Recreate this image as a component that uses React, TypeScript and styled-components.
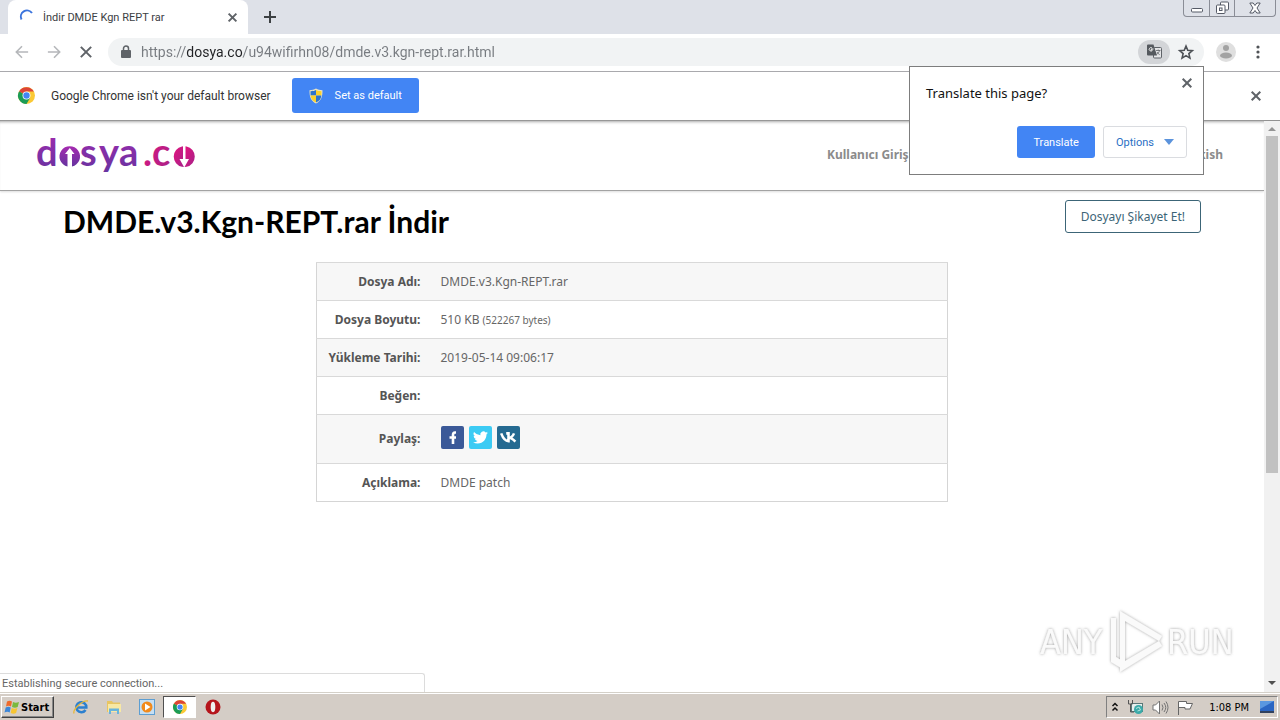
import React from "react";
import styled, { createGlobalStyle } from "styled-components";

const ui = `Roboto, "Noto Sans", sans-serif`;
const site = `"Noto Sans", "Open Sans", sans-serif`;
const classic = `"DejaVu Sans Condensed", "DejaVu Sans", sans-serif`;

const GlobalStyle = createGlobalStyle`
  * { box-sizing: border-box; }
  body { margin: 0; background: #fff; }
  button, input { font: inherit; margin: 0; }
  svg { display: block; flex: none; overflow: visible; }
`;

const Desktop = styled.div`
  position: relative;
  display: flex;
  flex-direction: column;
  min-height: 100vh;
  overflow: hidden;
  font-family: ${ui};
  font-size: 12px;
`;

const TabStrip = styled.div`
  display: flex;
  height: 34px;
  background: #dee1e8;
  padding-left: 8px;
`;

const Tab = styled.div`
  display: flex;
  align-items: center;
  width: 240px;
  padding: 0 10px 0 12px;
  background: #fff;
  border-radius: 8px 8px 0 0;
  color: #3c4043;
  font-size: 11px;
`;

const TabTitle = styled.span`
  flex: 1;
  padding-left: 8px;
  white-space: nowrap;
`;

const IconButton = styled.button<{ $size?: number }>`
  display: flex;
  align-items: center;
  justify-content: center;
  flex: none;
  width: ${(p) => p.$size ?? 32}px;
  height: ${(p) => p.$size ?? 32}px;
  padding: 0;
  border: 0;
  background: none;
`;

const NewTab = styled(IconButton)`
  height: 34px;
  margin-left: 6px;
`;

const WindowButtons = styled.div`
  display: flex;
  height: 17px;
  margin-left: auto;
  margin-right: 4px;
  border: 1px solid #8a8d96;
  border-top: 0;
  border-radius: 0 0 4px 4px;
`;

const WindowButton = styled.button<{ $wide?: boolean }>`
  display: flex;
  align-items: center;
  justify-content: center;
  width: ${(p) => (p.$wide ? 41 : 25)}px;
  padding: 0;
  border: 0;
  border-left: 1px solid #8a8d96;
  background: none;
  &:first-child { border-left: 0; }
`;

const Toolbar = styled.div`
  display: flex;
  align-items: center;
  height: 38px;
  padding: 0 6px 2px;
  border-bottom: 1px solid #a9a9ad;
`;

const Omnibox = styled.div`
  display: flex;
  align-items: center;
  flex: 1;
  height: 28px;
  margin: 0 6px;
  padding: 0 2px 0 12px;
  border-radius: 14px;
  background: #f1f3f4;
`;

const Address = styled.input`
  flex: 1;
  min-width: 0;
  height: 24px;
  margin-left: 9px;
  padding: 0;
  border: 0;
  outline: 0;
  font-size: 14px;
  color: #777b80;
  background: linear-gradient(90deg, #777b80 45px, #202124 45px, #202124 102px, #777b80 102px);
  background-clip: text;
  -webkit-background-clip: text;
  -webkit-text-fill-color: transparent;
`;

const TranslateChip = styled(IconButton)`
  height: 24px;
  border-radius: 12px;
  background: #d3d5d8;
`;

const InfoBar = styled.div`
  display: flex;
  align-items: center;
  height: 49px;
  padding: 0 8px 1px 18px;
  border-bottom: 1px solid #929292;
  color: #333;
`;

const InfoText = styled.span`
  margin: 0 21px 0 16px;
  white-space: nowrap;
`;

const FilledButton = styled.button<{ $height: number; $pad: number }>`
  display: flex;
  align-items: center;
  gap: 12px;
  height: ${(p) => p.$height}px;
  padding: 0 ${(p) => p.$pad}px;
  border: 0;
  border-radius: 3px;
  background: #4285f4;
  color: #fff;
  font-size: 11px;
  white-space: nowrap;
`;

const OutlineButton = styled(FilledButton)`
  gap: 10px;
  border: 1px solid #dadce0;
  background: #fff;
  color: #2a6fc4;
`;

const InfoClose = styled(IconButton)`
  margin-left: auto;
`;

const Viewport = styled.div`
  position: relative;
  display: flex;
  flex: 1;
`;

const Page = styled.div`
  flex: 1;
  min-width: 0;
  font-family: ${site};
  color: #5a5a5a;
`;

const SiteHeader = styled.header`
  display: flex;
  align-items: center;
  justify-content: space-between;
  height: 70px;
  padding: 0 41px 2px 34px;
  border-bottom: 1px solid #a3a3a3;
  box-shadow: inset 0 3px 3px -2px #aaa, 0 1px 2px #ddd;
`;

const SiteNav = styled.nav`
  display: flex;
  justify-content: space-between;
  width: 396px;
  font-weight: 700;
  line-height: 16px;
  a { color: #8b8b8b; text-decoration: none; }
`;

const TitleRow = styled.div`
  display: flex;
  align-items: flex-start;
  justify-content: space-between;
  padding: 9px 63px 0;
`;

const Title = styled.h1`
  margin: 0;
  color: #000;
  font-family: Lato, sans-serif;
  font-size: 30px;
  font-weight: 700;
  line-height: 42px;
`;

const ReportButton = styled.button`
  height: 33px;
  padding: 0 15px;
  border: 1px solid #3c6577;
  border-radius: 3px;
  background: #fff;
  color: #3c6577;
  white-space: nowrap;
`;

const FileTable = styled.table`
  width: 50%;
  margin: 20px auto 0;
  border: 1px solid #d5d5d5;
  border-collapse: collapse;
  th, td {
    height: 38px;
    padding: 0 10px;
    border-top: 1px solid #d9d9d9;
    line-height: 18px;
  }
  th { width: 114px; text-align: right; white-space: nowrap; color: #555; }
  td { color: #666; }
  tr:nth-child(odd) { background: #f7f7f7; }
  small { font-size: 10px; line-height: 14px; }
`;

const ShareRow = styled.div`
  display: flex;
  gap: 5px;
  padding: 11px 0 14px;
`;

const ShareLink = styled.a<{ $color: string }>`
  display: flex;
  align-items: center;
  justify-content: center;
  width: 23px;
  height: 23px;
  border-radius: 2px;
  background: ${(p) => p.$color};
`;

const ScrollBar = styled.div`
  display: flex;
  flex-direction: column;
  align-items: center;
  width: 16px;
  padding: 4px 0 5px;
  background: #f1f1f1;
`;

const ScrollThumb = styled.div`
  width: 12px;
  height: 60%;
  margin-top: 3px;
  margin-bottom: auto;
  background: #c1c1c1;
`;

const Status = styled.div`
  position: absolute;
  left: 0;
  bottom: 0;
  width: 425px;
  height: 19px;
  padding-left: 2px;
  border: 1px solid #dcdcdc;
  border-left: 0;
  border-bottom: 0;
  border-radius: 0 3px 0 0;
  background: #fff;
  color: #666;
  font-size: 11px;
  line-height: 19px;
`;

const Watermark = styled.div`
  position: absolute;
  right: 44px;
  bottom: 18px;
`;

const Popup = styled.section`
  position: absolute;
  top: 66px;
  right: 76px;
  width: 295px;
  height: 109px;
  padding: 8px 8px 16px 16px;
  border: 1px solid #7d7d7d;
  background: #fff;
  display: flex;
  flex-direction: column;
  justify-content: space-between;
`;

const PopupHead = styled.div`
  display: flex;
  justify-content: space-between;
  align-items: flex-start;
`;

const PopupTitle = styled.h2`
  margin: 8px 0 0;
  color: #111;
  font-family: ${site};
  font-size: 13px;
  font-weight: 400;
  line-height: 20px;
`;

const PopupActions = styled.div`
  display: flex;
  justify-content: flex-end;
  gap: 8px;
  padding-right: 8px;
`;

const Taskbar = styled.footer`
  display: flex;
  align-items: center;
  height: 28px;
  padding: 1px 2px 0 1px;
  border-top: 1px solid #d4d0c8;
  box-shadow: inset 0 1px #fff;
  background: #d4cdc6;
  font-family: ${classic};
`;

const StartButton = styled.button`
  display: flex;
  align-items: center;
  gap: 1px;
  width: 53px;
  height: 22px;
  margin-right: 10px;
  padding: 0 2px;
  border: 1px solid;
  border-color: #fff #404040 #404040 #fff;
  box-shadow: inset -1px -1px #888;
  background: #d4cdc6;
  font-size: 11px;
  font-weight: 700;
`;

const TaskButton = styled.button<{ $active?: boolean }>`
  display: flex;
  align-items: center;
  justify-content: center;
  width: 33px;
  height: 22px;
  padding: 0;
  border: 1px solid;
  border-color: ${(p) => (p.$active ? "#505050 #fff #fff #505050" : "transparent")};
  background: ${(p) => (p.$active ? "#fff" : "none")};
`;

const Tray = styled.div`
  display: flex;
  align-items: center;
  gap: 8px;
  height: 22px;
  margin-left: auto;
  padding: 0 2px 0 4px;
  border: 1px solid;
  border-color: #808080 #fff #fff #808080;
  color: #000;
  font-size: 11px;
  time { margin: 0 2px 0 7px; }
`;

const Cross = ({ size = 10, color = "#5f6368", width = 2 }: { size?: number; color?: string; width?: number }) => (
  <svg width={size} height={size} viewBox="0 0 10 10" stroke={color} strokeWidth={(width * 10) / size} aria-hidden>
    <path d="M.7.7l8.6 8.6M9.3.7L.7 9.3" />
  </svg>
);

const Arrow = ({ flip }: { flip?: boolean }) => (
  <svg width="14" height="14" viewBox="0 0 16 16" fill="none" stroke="#b5b7ba" strokeWidth="1.8" aria-hidden>
    <path d={flip ? "M1 8h13M8 1.5L14.5 8 8 14.5" : "M15 8H2M8 1.5L1.5 8 8 14.5"} />
  </svg>
);

const ChromeIcon = ({ size = 17 }: { size?: number }) => (
  <svg width={size} height={size} viewBox="0 0 24 24" aria-hidden>
    <circle cx="12" cy="12" r="12" fill="#fbc935" />
    <path d="M12 12L1.6 6A12 12 0 0 0 12 24l5.2-9z" fill="#1b9c56" />
    <path d="M12 12L1.6 6A12 12 0 0 1 22.4 6.500H12z" fill="#dc4437" />
    <circle cx="12" cy="12" r="5.600" fill="#fff" />
    <circle cx="12" cy="12" r="4.500" fill="#4285f4" />
  </svg>
);

const Shield = () => (
  <svg width="14" height="16" viewBox="0 0 14 16" aria-hidden>
    <path d="M7 .5c2 1.300 4 1.700 6.500 1.700 0 6.500-1 10.300-6.500 13.300C1.500 12.500.5 8.700.5 2.200 3 2.200 5 1.800 7 .5z" fill="#e9e4c4" />
    <path d="M7 2v5.500H1.600L1.500 3.200C4 3.200 5.500 2.800 7 2z" fill="#2e74cc" />
    <path d="M7 2v5.500h5.400l.1-4.300C10 3.200 8.500 2.800 7 2z" fill="#fbd12b" />
    <path d="M7 7.500H1.600C2 11 3.500 12.800 7 14.500z" fill="#fbd12b" />
    <path d="M7 7.500h5.400C12 11 10.500 12.800 7 14.500z" fill="#2e74cc" />
  </svg>
);

const Logo = () => (
  <svg width="164" height="50" viewBox="34 128 164 50" role="img" aria-label="dosya.co">
    <defs>
      <linearGradient id="violet" x1="0" y1="0" x2="0" y2="1">
        <stop offset="0" stopColor="#a52ab0" />
        <stop offset="1" stopColor="#65339f" />
      </linearGradient>
      <linearGradient id="pink" x1="0" y1="0" x2="1" y2="1">
        <stop offset="0" stopColor="#e5127d" />
        <stop offset="1" stopColor="#a5238a" />
      </linearGradient>
    </defs>
    <g fontFamily="Lato, sans-serif" fontSize="38" fontWeight="700">
      <text x="36 80 99 119" y="164" fill="url(#violet)">dsya</text>
      <text x="143 152" y="164" fill="url(#pink)">.c</text>
    </g>
    <path d="M67.500 164.500A10.300 10.300 0 1 1 72 164.500V152h2.500l-4.700-6-4.800 6h2.500z" fill="url(#violet)" />
    <path d="M182 144.500A10.300 10.300 0 0 0 182 164.700l2 .3-4.500-8H183v-12.700z" fill="url(#pink)" />
    <path d="M186.500 144.500A10.300 10.300 0 0 1 186.500 164.700l-2 .3 4.500-8h-3.500v-12.700z" fill="url(#pink)" />
  </svg>
);

const AnyRun = () => (
  <svg width="200" height="66" viewBox="0 0 200 66" role="img" aria-label="ANY RUN">
    <defs>
      <filter id="halo" x="-10%" y="-10%" width="120%" height="120%">
        <feDropShadow dx="0" dy="0" stdDeviation="1.500" floodColor="#777" floodOpacity=".7" />
      </filter>
    </defs>
    <g filter="url(#halo)" fill="#fafafa" fontFamily="DejaVu Sans Condensed, sans-serif" fontSize="34">
      <text x="4" y="46">ANY</text>
      <text x="131" y="46">RUN</text>
      <path d="M84 3l42 25-3 5-34-20v40l34-20 3 5-42 26z" />
      <path d="M75 10h5v39l5 3v8l-10-6z" />
    </g>
  </svg>
);

const rows: { label: string; value: React.ReactNode }[] = [
  { label: "Dosya Adı:", value: "DMDE.v3.Kgn-REPT.rar" },
  { label: "Dosya Boyutu:", value: <>510 KB <small>(522267 bytes)</small></> },
  { label: "Yükleme Tarihi:", value: "2019-05-14 09:06:17" },
  { label: "Beğen:", value: null },
  {
    label: "Paylaş:",
    value: (
      <ShareRow>
        <ShareLink href="#facebook" aria-label="Facebook" $color="#3b5998">
          <svg width="15" height="17" viewBox="0 0 15 17" fill="none" stroke="#fff" strokeWidth="2.600" aria-hidden>
            <path d="M11 3.500H10Q8 3.500 8 6v9M4.500 8.500h6.500" />
          </svg>
        </ShareLink>
        <ShareLink href="#twitter" aria-label="Twitter" $color="#3ccbf4">
          <svg width="15" height="15" viewBox="0 0 24 24" fill="#fff" aria-hidden>
            <path d="M23.950 4.570a10 10 0 0 1-2.820.77 4.960 4.960 0 0 0 2.160-2.720 9.900 9.900 0 0 1-3.120 1.180 4.920 4.920 0 0 0-8.390 4.490A14 14 0 0 1 1.640 3.160a4.920 4.920 0 0 0 1.520 6.570 4.900 4.900 0 0 1-2.230-.61v.06a4.920 4.920 0 0 0 3.950 4.830 5 5 0 0 1-2.210.08 4.940 4.940 0 0 0 4.600 3.420A9.870 9.870 0 0 1 0 19.540a14 14 0 0 0 7.550 2.210c9.050 0 14-7.500 14-13.990l-.02-.63a10 10 0 0 0 2.420-2.560z" />
          </svg>
        </ShareLink>
        <ShareLink href="#vk" aria-label="VK" $color="#256a91">
          <svg width="17" height="11" viewBox="0 0 18 12" fill="none" stroke="#fff" strokeWidth="2.800" aria-hidden>
            <path d="M1 1.500c1.500 4 4 8.500 8 8.500V1.500H6.500M9 6.500c3 0 5-2.500 6-5M9 6c3 0 5 2 7.500 4.500" />
          </svg>
        </ShareLink>
      </ShareRow>
    ),
  },
  { label: "Açıklama:", value: "DMDE patch" },
];

export default function App() {
  return (
    <Desktop>
      <GlobalStyle />
      <TabStrip>
        <Tab>
          <svg width="15" height="15" viewBox="0 0 15 15" fill="none" stroke="#3b74dd" strokeWidth="2" aria-hidden>
            <path d="M1.500 9.500A6.200 6.200 0 0 1 12 3" />
          </svg>
          <TabTitle>İndir DMDE Kgn REPT rar</TabTitle>
          <IconButton $size={12} aria-label="Close tab"><Cross size={9} /></IconButton>
        </Tab>
        <NewTab aria-label="New tab">
          <svg width="12" height="12" viewBox="0 0 12 12" stroke="#3c4043" strokeWidth="2" aria-hidden>
            <path d="M6 0v12M0 6h12" />
          </svg>
        </NewTab>
        <WindowButtons>
          <WindowButton aria-label="Minimize">
            <svg width="12" height="16" viewBox="0 0 12 16" aria-hidden>
              <rect x=".5" y="8.500" width="11" height="3.500" rx="1" fill="#fff" stroke="#555a66" />
            </svg>
          </WindowButton>
          <WindowButton aria-label="Restore">
            <svg width="13" height="14" viewBox="0 0 13 14" fill="#fff" stroke="#555a66" aria-hidden>
              <rect x="4.500" y="1" width="8" height="8" rx="1" />
              <rect x=".5" y="4" width="8.500" height="8.500" rx="1" />
              <rect x="3.500" y="7" width="2.500" height="2.500" />
            </svg>
          </WindowButton>
          <WindowButton $wide aria-label="Close">
            <svg width="12" height="12" viewBox="0 0 12 12" fill="#fff" stroke="#555a66" aria-hidden>
              <path d="M.8 1h3.400L6 3.500 7.800 1h3.400L8 6l3.200 5H7.800L6 8.500 4.200 11H.8L4 6z" />
            </svg>
          </WindowButton>
        </WindowButtons>
      </TabStrip>

      <Toolbar>
        <IconButton aria-label="Back"><Arrow /></IconButton>
        <IconButton aria-label="Forward"><Arrow flip /></IconButton>
        <IconButton aria-label="Stop"><Cross size={12} /></IconButton>
        <Omnibox>
          <svg width="12" height="14" viewBox="0 0 12 14" aria-hidden>
            <rect x="1" y="5" width="10" height="8" rx="1" fill="#5f6368" />
            <path d="M3.500 5V3.500a2.500 2.500 0 0 1 5 0V5" fill="none" stroke="#5f6368" strokeWidth="1.500" />
          </svg>
          <Address aria-label="Address" readOnly value="https://dosya.co/u94wifirhn08/dmde.v3.kgn-rept.rar.html" />
          <TranslateChip aria-label="Translate page">
            <svg width="15" height="15" viewBox="0 0 15 15" aria-hidden>
              <rect x="6.500" y="3.500" width="8" height="10.500" rx="1" fill="#e4e5e7" stroke="#5f6368" />
              <path d="M1 .5h5.500L10 11.500H1a1 1 0 0 1-1-1v-9a1 1 0 0 1 1-1z" fill="#55595e" />
              <path d="M6.500 5H4.300v1.200h1.100A1.700 1.700 0 1 1 5 4" fill="none" stroke="#eee" />
              <path d="M9 6.500h4.500M11.200 5.500v1M12.500 6.500c-.5 2-1.500 3-3 4M10 8c.7 1.200 1.500 2 2.700 2.700" fill="none" stroke="#5f6368" strokeWidth=".8" />
            </svg>
          </TranslateChip>
          <IconButton aria-label="Bookmark">
            <svg width="16" height="16" viewBox="0 0 24 24" fill="none" stroke="#4d5156" strokeWidth="2.400" aria-hidden>
              <path d="M12 3l2.600 6.300 6.900.6-5.200 4.500 1.600 6.700L12 17.500l-5.900 3.600 1.600-6.700L2.500 9.900l6.900-.6z" />
            </svg>
          </IconButton>
        </Omnibox>
        <IconButton aria-label="Profile">
          <svg width="20" height="20" viewBox="0 0 20 20" aria-hidden>
            <circle cx="10" cy="10" r="10" fill="#dfdfdf" />
            <circle cx="10" cy="6" r="3" fill="#a2a2a2" />
            <ellipse cx="10" cy="13.500" rx="6" ry="3" fill="#a2a2a2" />
          </svg>
        </IconButton>
        <IconButton aria-label="Menu">
          <svg width="4" height="14" viewBox="0 0 4 14" fill="#505357" aria-hidden>
            <circle cx="2" cy="2" r="1.600" /><circle cx="2" cy="7" r="1.600" /><circle cx="2" cy="12" r="1.600" />
          </svg>
        </IconButton>
      </Toolbar>

      <InfoBar>
        <ChromeIcon />
        <InfoText>Google Chrome isn't your default browser</InfoText>
        <FilledButton $height={35} $pad={17}><Shield />Set as default</FilledButton>
        <InfoClose aria-label="Dismiss"><Cross /></InfoClose>
      </InfoBar>

      <Viewport>
        <Page>
          <SiteHeader>
            <Logo />
            <SiteNav>
              <a href="#login">Kullanıcı Girişi</a>
              <a href="#language">Turkish</a>
            </SiteNav>
          </SiteHeader>
          <main>
            <TitleRow>
              <Title>DMDE.v3.Kgn-REPT.rar İndir</Title>
              <ReportButton>Dosyayı Şikayet Et!</ReportButton>
            </TitleRow>
            <FileTable>
              <tbody>
                {rows.map((r) => (
                  <tr key={r.label}>
                    <th scope="row">{r.label}</th>
                    <td>{r.value}</td>
                  </tr>
                ))}
              </tbody>
            </FileTable>
          </main>
        </Page>
        <ScrollBar>
          <svg width="8" height="8" viewBox="0 0 8 8" aria-hidden><path d="M0 6l4-4 4 4z" fill="#949494" /></svg>
          <ScrollThumb />
          <svg width="8" height="8" viewBox="0 0 8 8" aria-hidden><path d="M0 2l4 4 4-4z" fill="#505050" /></svg>
        </ScrollBar>
        <Status role="status">Establishing secure connection...</Status>
        <Watermark><AnyRun /></Watermark>
      </Viewport>

      <Taskbar>
        <StartButton>
          <svg width="16" height="16" viewBox="0 0 16 16" aria-hidden>
            <path d="M3 2.500c2-1 3.500-.8 5 0L7 7.500c-2-1-3.300-.8-5 0z" fill="#ee6a2c" />
            <path d="M9 3c2 1 3.500 1 6 0l-1.300 5c-2 1-3.700.8-5.700 0z" fill="#7ab93c" />
            <path d="M1.700 8.500c2-.9 3.500-.8 5 0l-1 5c-1.700-1-3.400-.8-5.200 0z" fill="#3b86d8" />
            <path d="M7.700 9c2 1 3.500 1 5.700 0l-1.300 5c-2 1-3.500.8-5.400 0z" fill="#f7c531" />
          </svg>
          Start
        </StartButton>
        <TaskButton aria-label="Internet Explorer">
          <svg width="16" height="16" viewBox="0 0 16 16" fill="none" aria-hidden>
            <path d="M12.500 11a5 5 0 1 1 .8-2.500H4" stroke="#2c80cf" strokeWidth="2.600" />
            <path d="M1 14.500C-.5 11 9 1 15 2" stroke="#e6b73a" strokeWidth="1.300" />
          </svg>
        </TaskButton>
        <TaskButton aria-label="Explorer">
          <svg width="16" height="16" viewBox="0 0 16 16" aria-hidden>
            <path d="M1 2h5l1 1.500h7V13H1z" fill="#e8c562" />
            <path d="M2 5h13v8H2z" fill="#f8e8a4" />
            <path d="M3 15V9.500h10V15h-2v-3H5v3z" fill="#69b4dc" />
          </svg>
        </TaskButton>
        <TaskButton aria-label="Media Player">
          <svg width="16" height="16" viewBox="0 0 16 16" aria-hidden>
            <rect x=".5" y=".5" width="15" height="15" fill="#c6dff3" stroke="#5d9ed2" />
            <circle cx="8" cy="8" r="5.500" fill="#f18a1c" />
            <path d="M6 4.500L11.500 8 6 11.500z" fill="#fff" />
          </svg>
        </TaskButton>
        <TaskButton $active aria-label="Google Chrome"><ChromeIcon size={14} /></TaskButton>
        <TaskButton aria-label="Opera">
          <svg width="16" height="16" viewBox="0 0 16 16" aria-hidden>
            <circle cx="8" cy="8" r="7.500" fill="#b5141b" />
            <ellipse cx="8" cy="8" rx="2.300" ry="5.200" fill="#eee" />
          </svg>
        </TaskButton>
        <Tray>
          <svg width="8" height="10" viewBox="0 0 8 10" fill="none" stroke="#111" strokeWidth="1.500" aria-hidden>
            <path d="M1.500 4L4 1.500 6.500 4M1.500 8.500L4 6l2.500 2.500" />
          </svg>
          <svg width="17" height="16" viewBox="0 0 17 16" aria-hidden>
            <rect x="4.500" y="4.500" width="11" height="8" fill="#e6efee" stroke="#587878" />
            <path d="M1.500 1v4h4V1M3.500 5v8H7" fill="none" stroke="#555" />
            <circle cx="11.500" cy="10.500" r="4.500" fill="#3baaa9" />
            <path d="M9 9.500l3-1.500 1.500 3-3 1" fill="none" stroke="#b5e6df" />
          </svg>
          <svg width="17" height="15" viewBox="0 0 17 15" fill="none" stroke="#737373" aria-hidden>
            <path d="M1 5h2.500L7.500 1v13L3.500 10H1z" fill="#fff" />
            <path d="M10 4.500q2 3 0 6M12 3q3.500 4.500 0 9M14 1.500q4 6 0 12" />
          </svg>
          <svg width="17" height="15" viewBox="0 0 17 15" fill="#fff" stroke="#666" aria-hidden>
            <path d="M1.500 15V1.500h8v2h6L13 9H8V7.500H1.500" />
          </svg>
          <time>1:08 PM</time>
          <svg width="16" height="14" viewBox="0 0 16 14" aria-hidden>
            <path d="M1 1h14v10H1z" fill="#2b66c3" />
            <path d="M1 1h14L1 9z" fill="#5a97e0" />
            <path d="M1 11h14v2H1z" fill="#31415e" />
          </svg>
        </Tray>
      </Taskbar>

      <Popup aria-label="Translate">
        <PopupHead>
          <PopupTitle>Translate this page?</PopupTitle>
          <IconButton $size={16} aria-label="Close"><Cross /></IconButton>
        </PopupHead>
        <PopupActions>
          <FilledButton $height={32} $pad={16}>Translate</FilledButton>
          <OutlineButton $height={32} $pad={12}>
            Options
            <svg width="10" height="6" viewBox="0 0 10 6" aria-hidden><path d="M0 0h10L5 6z" fill="#5b93dc" /></svg>
          </OutlineButton>
        </PopupActions>
      </Popup>
    </Desktop>
  );
}
